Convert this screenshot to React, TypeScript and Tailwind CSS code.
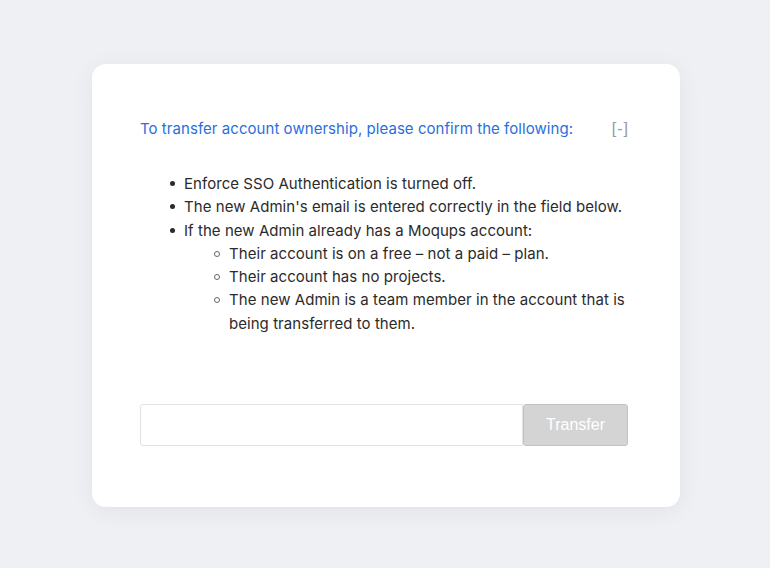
import React from "react";

function Item({ children, nested }: { children: React.ReactNode; nested?: boolean }) {
  return (
    <li className="flex items-start">
      <span className={nested ? "w-[15px] h-[23.3px] flex items-center shrink-0" : "w-[14px] h-[23.3px] flex items-center shrink-0"}>
        {nested ? (
          <span className="block w-[6px] h-[6px] rounded-full border border-[#666]" />
        ) : (
          <span className="block w-[5px] h-[5px] rounded-full bg-[#2b2b2b]" />
        )}
      </span>
      <div className="flex-1">{children}</div>
    </li>
  );
}

export default function App() {
  return (
    <div className="min-h-screen w-full bg-[#eff0f3] flex items-center justify-center" style={{ fontFamily: "Inter, 'Noto Sans', sans-serif" }}>
      <div className="w-[588px] h-[443px] bg-white rounded-[14px] shadow-[0_4px_24px_rgba(0,0,0,0.06)] pl-12 pr-[52px] pt-[55px] mt-[3px] ml-[2px] flex flex-col">
        <div className="flex items-center justify-between h-5">
          <span className="text-[15px] leading-5 tracking-[0.05px] text-[#2a6fdb]">To transfer account ownership, please confirm the following:</span>
          <span className="text-[16px] leading-5 tracking-[1px] mr-[-1px] text-[#9a9a9a]" style={{ fontFamily: "'Liberation Sans', Arial, sans-serif" }}>[-]</span>
        </div>
        <ul className="pl-[30px] mt-[33px] text-[15px] leading-[23.3px] tracking-[0.05px] text-[#2b2b2b]">
          <Item>Enforce SSO Authentication is turned off.</Item>
          <Item>The new Admin's email is entered correctly in the field below.</Item>
          <Item>
            If the new Admin already has a Moqups account:
            <ul className="pl-[30px]">
              <Item nested>Their account is on a free – not a paid – plan.</Item>
              <Item nested>Their account has no projects.</Item>
              <Item nested>The new Admin is a team member in the account that is being transferred to them.</Item>
            </ul>
          </Item>
        </ul>
        <div className="flex mt-auto mb-[61px] h-[42px]">
          <input className="flex-1 h-full border border-[#e2e2e2] rounded-l-[3px] outline-none px-3" />
          <button className="w-[105px] h-full bg-[#d4d4d4] border border-[#c3c3c3] rounded-[3px] text-white text-[16px]" style={{ fontFamily: "'Liberation Sans', Arial, sans-serif" }}>Transfer</button>
        </div>
      </div>
    </div>
  );
}
